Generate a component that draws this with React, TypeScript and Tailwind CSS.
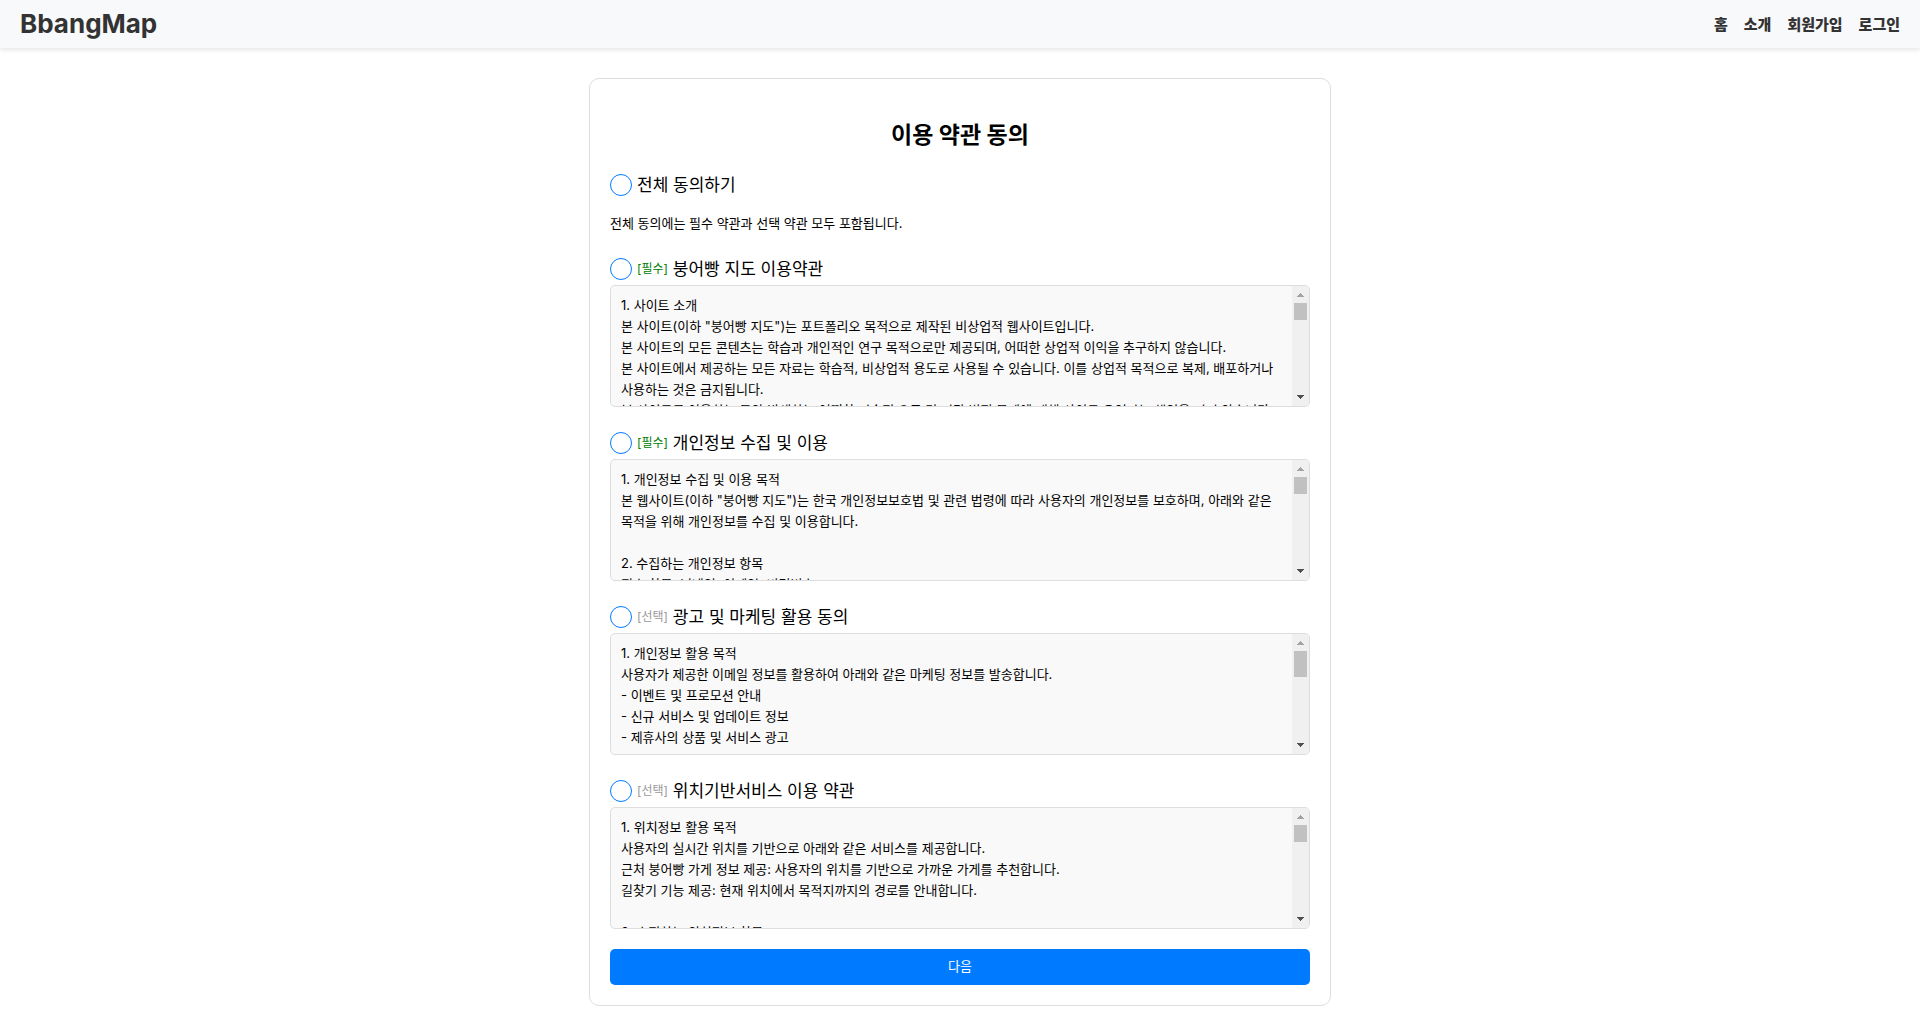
import { useState } from "react"
import type { UIEvent } from "react"

interface Term {
  id: string
  required: boolean
  title: string
  thumbHeight: number
  content: string
}

const NAV_LINKS = ["홈", "소개", "회원가입", "로그인"]

// Height left for the thumb between the two arrow buttons
const TRACK_HEIGHT = 86

const TERMS: Term[] = [
  {
    id: "service",
    required: true,
    title: "붕어빵 지도 이용약관",
    thumbHeight: 17,
    content: `1. 사이트 소개
본 사이트(이하 "붕어빵 지도")는 포트폴리오 목적으로 제작된 비상업적 웹사이트입니다.
본 사이트의 모든 콘텐츠는 학습과 개인적인 연구 목적으로만 제공되며, 어떠한 상업적 이익을 추구하지 않습니다.
본 사이트에서 제공하는 모든 자료는 학습적, 비상업적 용도로 사용될 수 있습니다. 이를 상업적 목적으로 복제, 배포하거나 사용하는 것은 금지됩니다.
본 사이트를 이용하는 동안 발생하는 어떠한 기술적 오류 및 기타 법적 문제에 대해 사이트 운영자는 책임을 지지 않습니다. 또한
사이트의 내용은 사전 공지 없이 변경될 수 있습니다.`,
  },
  {
    id: "privacy",
    required: true,
    title: "개인정보 수집 및 이용",
    thumbHeight: 17,
    content: `1. 개인정보 수집 및 이용 목적
본 웹사이트(이하 "붕어빵 지도")는 한국 개인정보보호법 및 관련 법령에 따라 사용자의 개인정보를 보호하며, 아래와 같은 목적을 위해 개인정보를 수집 및 이용합니다.

2. 수집하는 개인정보 항목
필수 항목: 닉네임, 이메일, 비밀번호`,
  },
  {
    id: "marketing",
    required: false,
    title: "광고 및 마케팅 활용 동의",
    thumbHeight: 26,
    content: `1. 개인정보 활용 목적
사용자가 제공한 이메일 정보를 활용하여 아래와 같은 마케팅 정보를 발송합니다.
- 이벤트 및 프로모션 안내
- 신규 서비스 및 업데이트 정보
- 제휴사의 상품 및 서비스 광고

2. 수집하는 정보 항목`,
  },
  {
    id: "location",
    required: false,
    title: "위치기반서비스 이용 약관",
    thumbHeight: 17,
    content: `1. 위치정보 활용 목적
사용자의 실시간 위치를 기반으로 아래와 같은 서비스를 제공합니다.
근처 붕어빵 가게 정보 제공: 사용자의 위치를 기반으로 가까운 가게를 추천합니다.
길찾기 기능 제공: 현재 위치에서 목적지까지의 경로를 안내합니다.

2. 수집하는 위치정보 항목`,
  },
]

const checkboxClass =
  "size-[22px] shrink-0 cursor-pointer appearance-none rounded-full border border-[#007bff] bg-white checked:bg-[#007bff]"

function TermsBox({ term }: { term: Term }) {
  const [progress, setProgress] = useState(0)

  const handleScroll = (e: UIEvent<HTMLDivElement>) => {
    const el = e.currentTarget
    const max = el.scrollHeight - el.clientHeight
    setProgress(max > 0 ? el.scrollTop / max : 0)
  }

  return (
    <div className="mt-[5px] flex h-[122px] overflow-hidden rounded-[5px] border border-[#dddddd] bg-[#f9f9f9]">
      <div
        onScroll={handleScroll}
        tabIndex={0}
        className="min-w-0 flex-1 overflow-y-auto px-2.5 py-[9px] text-[13px] leading-[21px] break-keep whitespace-pre-wrap [scrollbar-width:none]"
      >
        {term.content}
      </div>

      {/* Scrollbar */}
      <div className="flex w-[17px] shrink-0 flex-col items-center bg-[#f0f0f0]" aria-hidden="true">
        <svg width="17" height="17" viewBox="0 0 17 17" shapeRendering="crispEdges">
          <path d="M8 7h1v1h1v1h1v1h1v1H5v-1h1V9h1V8h1z" fill="#a3a3a3" />
        </svg>
        <div className="w-full flex-1 px-0.5">
          <div
            className="bg-[#c1c1c1]"
            style={{
              height: term.thumbHeight,
              marginTop: progress * (TRACK_HEIGHT - term.thumbHeight),
            }}
          />
        </div>
        <svg width="17" height="17" viewBox="0 0 17 17" shapeRendering="crispEdges">
          <path d="M5 6h7v1h-1v1h-1v1H9v1H8V9H7V8H6V7H5z" fill="#505050" />
        </svg>
      </div>
    </div>
  )
}

export default function App() {
  const [agreed, setAgreed] = useState<string[]>([])
  const allAgreed = agreed.length === TERMS.length

  const toggleAll = () => setAgreed(allAgreed ? [] : TERMS.map((term) => term.id))

  const toggle = (id: string) => {
    setAgreed((prev) => (prev.includes(id) ? prev.filter((item) => item !== id) : [...prev, id]))
  }

  return (
    <div className="min-h-screen bg-white font-[Inter,'Noto_Sans_CJK_KR',sans-serif] text-black">
      {/* Header */}
      <header className="flex h-12 items-center justify-between bg-[#f8f9fb] px-5 text-[#333333] shadow-[0_2px_5px_rgba(0,0,0,0.1)]">
        <a href="#" className="text-[26px] leading-8 font-bold">
          BbangMap
        </a>
        <nav className="flex gap-4 pt-0.5 text-[15px] leading-6 font-black">
          {NAV_LINKS.map((label) => (
            <a key={label} href="#">
              {label}
            </a>
          ))}
        </nav>
      </header>

      {/* Agreement form */}
      <main className="px-5 pt-[30px] pb-[30px]">
        <form
          onSubmit={(e) => e.preventDefault()}
          className="mx-auto max-w-[742px] rounded-[10px] border border-[#dddddd] p-5"
        >
          <h2 className="mt-5 text-center text-[23px] leading-8 font-bold">이용 약관 동의</h2>

          <label className="mt-[23px] flex items-center gap-[5px] text-[17px] leading-[22px]">
            <input type="checkbox" checked={allAgreed} onChange={toggleAll} className={checkboxClass} />
            전체 동의하기
          </label>
          <p className="mt-[17px] text-[13px] leading-[21px]">
            전체 동의에는 필수 약관과 선택 약관 모두 포함됩니다.
          </p>

          <div className="mt-6 mb-5 flex flex-col gap-[25px]">
            {TERMS.map((term) => (
              <section key={term.id}>
                <label className="flex items-center gap-[5px] text-[17px] leading-[22px]">
                  <input
                    type="checkbox"
                    checked={agreed.includes(term.id)}
                    onChange={() => toggle(term.id)}
                    className={checkboxClass}
                  />
                  <span className={term.required ? "text-xs text-[#008000]" : "text-xs text-[#999999]"}>
                    {term.required ? "[필수]" : "[선택]"}
                  </span>
                  {term.title}
                </label>
                <TermsBox term={term} />
              </section>
            ))}
          </div>

          <button
            type="submit"
            className="h-9 w-full cursor-pointer rounded-[5px] bg-[#007bff] text-[13px] text-white"
          >
            다음
          </button>
        </form>
      </main>
    </div>
  )
}
